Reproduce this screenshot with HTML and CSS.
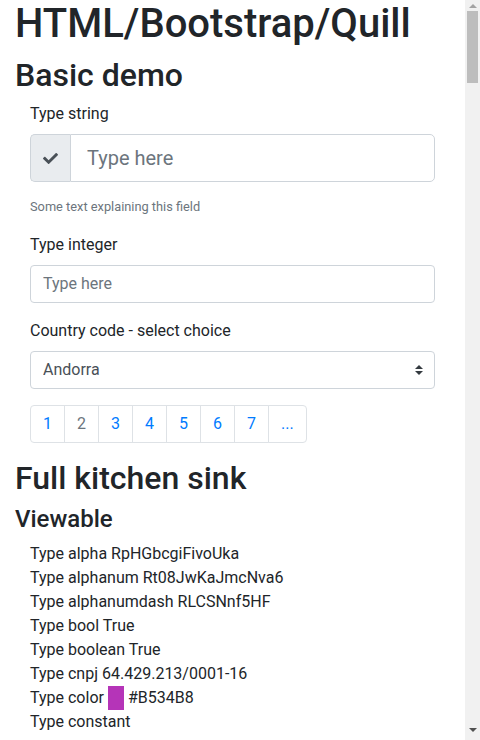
FILE: index.html
```html
<!DOCTYPE html>
<html lang="en">
<head>
  <meta charset="UTF-8">
  <title>HTML/Bootstrap/Quill</title>
  <link rel="stylesheet" href="styles.css">
</head>
<body>

<div class="container">
  <h1>HTML/Bootstrap/Quill</h1>
  <h2>Basic demo</h2>

  <form class="demo-form">
    <div class="form-group">
      <label for="typeString">Type string</label>
      <div class="input-group input-group-lg">
        <span class="input-group-text">
          <svg class="icon-check" viewBox="0 0 512 512" width="15" height="15" aria-hidden="true">
            <path d="M173.9 439.4l-166.4-166.4c-10-10-10-26.2 0-36.2l36.2-36.2c10-10 26.2-10 36.2 0L192 312.7 432.1 72.6c10-10 26.2-10 36.2 0l36.2 36.2c10 10 10 26.2 0 36.2l-294.4 294.4c-10 10-26.2 10-36.2 0z"/>
          </svg>
        </span>
        <input type="text" id="typeString" class="form-control" placeholder="Type here">
      </div>
      <small class="form-text">Some text explaining this field</small>
    </div>

    <div class="form-group">
      <label for="typeInteger">Type integer</label>
      <input type="number" id="typeInteger" class="form-control" placeholder="Type here">
    </div>

    <div class="form-group">
      <label for="countryCode">Country code - select choice</label>
      <div class="select-wrap">
        <select id="countryCode" class="custom-select">
          <option>Andorra</option>
          <option>United Arab Emirates</option>
          <option>Afghanistan</option>
          <option>Antigua and Barbuda</option>
        </select>
        <svg class="select-arrows" viewBox="0 0 4 5" width="8" height="10" aria-hidden="true">
          <path d="M2 0L0 2h4zm0 5L0 3h4z"/>
        </svg>
      </div>
    </div>

    <ul class="pagination">
      <li><a class="page-link" href="#">1</a></li>
      <li><span class="page-link disabled">2</span></li>
      <li><a class="page-link" href="#">3</a></li>
      <li><a class="page-link" href="#">4</a></li>
      <li><a class="page-link" href="#">5</a></li>
      <li><a class="page-link" href="#">6</a></li>
      <li><a class="page-link" href="#">7</a></li>
      <li><a class="page-link" href="#">...</a></li>
    </ul>
  </form>

  <h2>Full kitchen sink</h2>
  <h4>Viewable</h4>
  <ul class="view-list">
    <li>Type alpha RpHGbcgiFivoUka</li>
    <li>Type alphanum Rt08JwKaJmcNva6</li>
    <li>Type alphanumdash RLCSNnf5HF</li>
    <li>Type bool True</li>
    <li>Type boolean True</li>
    <li>Type cnpj 64.429.213/0001-16</li>
    <li>Type color <span class="swatch" style="background-color: #B534B8"></span> #B534B8</li>
    <li>Type constant</li>
  </ul>
</div>

<!-- page scrollbar, drawn since the window shows one -->
<div class="scrollbar" aria-hidden="true">
  <div class="sb-btn"><span class="sb-up"></span></div>
  <div class="sb-thumb"></div>
  <div class="sb-track"></div>
  <div class="sb-btn sb-btn-down"><span class="sb-down"></span></div>
</div>

</body>
</html>
```

FILE: styles.css
```css
* {
  box-sizing: border-box;
}

html,
body {
  height: 100%;
  overflow: hidden;
}

body {
  font-family: Roboto, 'Liberation Sans', sans-serif;
  font-size: 16px;
  line-height: 1.5;
  color: #212529;
  background-color: #fff;
  margin: 0;
  display: flex;
}

.container {
  flex: 1 1 auto;
  min-width: 0;
  padding: 0 15px;
}

h1,
h2,
h4 {
  margin-top: 0;
  margin-bottom: 8px;
  font-weight: 500;
  line-height: 1.2;
}

h1 {
  font-size: 40px;
}

h2 {
  font-size: 32px;
}

h4 {
  font-size: 24px;
}

.demo-form {
  padding: 0 15px;
}

.form-group {
  margin-bottom: 16px;
}

label {
  display: inline-block;
  margin-bottom: 8px;
}

.form-control,
.custom-select {
  display: block;
  width: 100%;
  height: 38px;
  padding: 6px 12px;
  font-family: inherit;
  font-size: 16px;
  line-height: 1.5;
  color: #495057;
  background-color: #fff;
  border: 1px solid #ced4da;
  border-radius: 4px;
  margin: 0;
}

.form-control::placeholder {
  color: #6c757d;
  opacity: 1;
}

input[type="number"] {
  -moz-appearance: textfield;
}

input[type="number"]::-webkit-inner-spin-button,
input[type="number"]::-webkit-outer-spin-button {
  -webkit-appearance: none;
  margin: 0;
}

.input-group {
  display: flex;
  align-items: stretch;
  width: 100%;
}

.input-group .form-control {
  flex: 1 1 auto;
  width: 1%;
}

.input-group-text {
  display: flex;
  align-items: center;
  padding: 0 12px;
  background-color: #e9ecef;
  border: 1px solid #ced4da;
  border-right: none;
  border-radius: 5px 0 0 5px;
}

.icon-check {
  fill: #495057;
}

.input-group-lg .form-control {
  height: 48px;
  padding: 8px 16px;
  font-size: 20px;
  border-radius: 0 5px 5px 0;
}

.form-text {
  display: block;
  margin-top: 15px;
  font-size: 12.8px;
  color: #6c757d;
}

.select-wrap {
  position: relative;
}

.custom-select {
  -webkit-appearance: none;
  appearance: none;
  padding-right: 28px;
}

.select-arrows {
  position: absolute;
  right: 12px;
  top: 14px;
  fill: #343a40;
  pointer-events: none;
}

.pagination {
  display: flex;
  list-style: none;
  padding: 0;
  margin: 0 0 16px;
}

.page-link {
  display: block;
  padding: 8px 12px;
  margin-left: -1px;
  line-height: 1.25;
  color: #007bff;
  text-decoration: none;
  background-color: #fff;
  border: 1px solid #dee2e6;
}

.pagination li:first-child .page-link {
  margin-left: 0;
  border-radius: 4px 0 0 4px;
}

.pagination li:last-child .page-link {
  border-radius: 0 4px 4px 0;
}

.page-link.disabled {
  color: #6c757d;
}

.view-list {
  list-style: none;
  margin: 0;
  padding: 0 15px;
}

.swatch {
  display: inline-block;
  width: 16px;
  height: 24px;
  vertical-align: top;
}

.scrollbar {
  flex: 0 0 15px;
  height: 100vh;
  display: flex;
  flex-direction: column;
  background-color: #f1f1f1;
}

.sb-btn {
  height: 11px;
  display: flex;
  justify-content: center;
  align-items: center;
}

.sb-btn-down {
  height: 15px;
  align-items: flex-start;
  padding-top: 3px;
}

.sb-up {
  width: 0;
  height: 0;
  border-left: 4px solid transparent;
  border-right: 4px solid transparent;
  border-bottom: 4px solid #a3a3a3;
}

.sb-down {
  width: 0;
  height: 0;
  border-left: 4px solid transparent;
  border-right: 4px solid transparent;
  border-top: 4px solid #505050;
}

.sb-thumb {
  height: 72px;
  margin: 0 2px;
  background-color: #bdbdbd;
}

.sb-track {
  flex: 1 1 auto;
}
```
